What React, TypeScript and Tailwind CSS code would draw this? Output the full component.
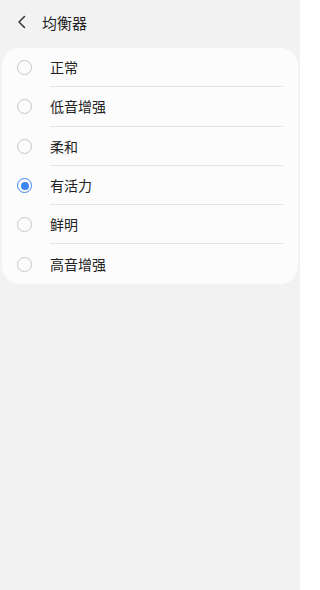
import React, { useState } from 'react';

const options = ['正常', '低音增强', '柔和', '有活力', '鲜明', '高音增强'];

const App = () => {
  const [selected, setSelected] = useState('有活力');

  return (
    <div
      className="w-[300px] h-[590px] bg-[#f2f2f2] text-[#222222]"
      style={{ fontFamily: '"Noto Sans CJK SC", "Noto Sans", sans-serif' }}
    >
      <div className="h-[44px] flex items-center pl-[17px]">
        <svg width="10" height="14" viewBox="0 0 10 14" fill="none" className="mr-[15px]">
          <path d="M7.5 1.5 L2 7 L7.5 12.5" stroke="#333333" strokeWidth="1.5" strokeLinecap="round" strokeLinejoin="round" />
        </svg>
        <span className="text-[15px] leading-none">均衡器</span>
      </div>

      <div className="mt-[4px] mx-[2px] bg-[#fcfcfc] rounded-[18px]">
        {options.map((opt, i) => {
          const checked = selected === opt;
          return (
            <button
              key={opt}
              onClick={() => setSelected(opt)}
              className="w-full h-[39.3px] flex items-center text-left"
            >
              <div className="w-[48px] flex pl-[15px]">
                {checked ? (
                  <span className="w-[15px] h-[15px] rounded-full border-[1.5px] border-[#3d86f5] flex items-center justify-center">
                    <span className="w-[8px] h-[8px] rounded-full bg-[#3d86f5]" />
                  </span>
                ) : (
                  <span className="w-[15px] h-[15px] rounded-full border-[1.5px] border-[#c6c6c6]" />
                )}
              </div>
              <div
                className={`flex-1 h-full flex items-center mr-[15px] ${
                  i < options.length - 1 ? 'border-b border-[#e4e4e4]' : ''
                }`}
              >
                <span className="text-[14px] leading-none">{opt}</span>
              </div>
            </button>
          );
        })}
      </div>
    </div>
  );
};

export default App;
